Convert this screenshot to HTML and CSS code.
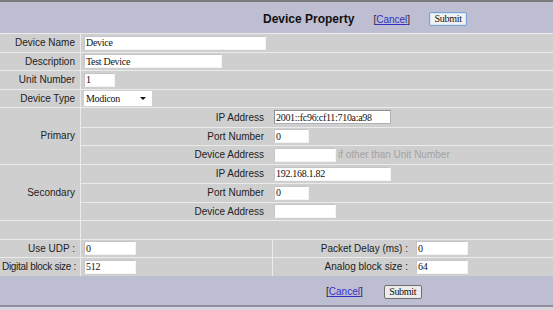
FILE: index.html
```html
<!DOCTYPE html>
<html lang="en">
<head>
  <meta charset="UTF-8">
  <meta name="viewport" content="width=device-width, initial-scale=1.0">
  <title>Device Property</title>
  <link rel="stylesheet" href="styles.css">
</head>
<body>
  <div class="bar bar-top">
    <span class="title">Device Property</span>
    <span class="cancel">[<a href="#">Cancel</a>]</span>
    <button class="btn btn-focus">Submit</button>
  </div>

  <div class="form">
    <div class="row">
      <div class="lbl">Device Name</div>
      <div class="val"><input class="txt w-name" value="Device"></div>
    </div>
    <div class="row">
      <div class="lbl">Description</div>
      <div class="val"><input class="txt w-desc" value="Test Device"></div>
    </div>
    <div class="row">
      <div class="lbl">Unit Number</div>
      <div class="val"><input class="txt w-unit" value="1"></div>
    </div>
    <div class="row">
      <div class="lbl">Device Type</div>
      <div class="val">
        <span class="select">
          <select>
            <option>Modicon</option>
          </select>
        </span>
      </div>
    </div>

    <div class="group">
      <div class="lbl">Primary</div>
      <div class="sub">
        <div class="sub-row">
          <div class="sublbl">IP Address</div>
          <div class="val"><input class="txt w-ip focus" value="2001::fc96:cf11:710a:a98"></div>
        </div>
        <div class="sub-row">
          <div class="sublbl">Port Number</div>
          <div class="val"><input class="txt w-port" value="0"></div>
        </div>
        <div class="sub-row">
          <div class="sublbl">Device Address</div>
          <div class="val"><input class="txt w-addr" value=""><span class="hint">if other than Unit Number</span></div>
        </div>
      </div>
    </div>

    <div class="group">
      <div class="lbl">Secondary</div>
      <div class="sub">
        <div class="sub-row">
          <div class="sublbl">IP Address</div>
          <div class="val"><input class="txt w-ip" value="192.168.1.82"></div>
        </div>
        <div class="sub-row">
          <div class="sublbl">Port Number</div>
          <div class="val"><input class="txt w-port" value="0"></div>
        </div>
        <div class="sub-row">
          <div class="sublbl">Device Address</div>
          <div class="val"><input class="txt w-addr" value=""></div>
        </div>
      </div>
    </div>

    <div class="row">
      <div class="lbl"></div>
      <div class="val"></div>
    </div>

    <div class="row row-split">
      <div class="lbl">Use UDP :</div>
      <div class="val val-mid"><input class="txt w-small" value="0"></div>
      <div class="lbl lbl-right">Packet Delay (ms) :</div>
      <div class="val"><input class="txt w-small" value="0"></div>
    </div>
    <div class="row row-split">
      <div class="lbl lbl-tight">Digital block size :</div>
      <div class="val val-mid"><input class="txt w-small" value="512"></div>
      <div class="lbl lbl-right">Analog block size :</div>
      <div class="val"><input class="txt w-small" value="64"></div>
    </div>
  </div>

  <div class="bar bar-bottom">
    <span class="cancel">[<a href="#">Cancel</a>]</span>
    <button class="btn">Submit</button>
  </div>
</body>
</html>
```

FILE: styles.css
```css
body {
  margin: 0;
  font-family: "Liberation Sans", Arial, sans-serif;
  font-size: 10px;
  color: #222;
  background-color: #d6d6de;
  overflow: hidden;
}

/* top and bottom bars */
.bar {
  display: flex;
  align-items: center;
  background-color: #bebed2;
}

.bar-top {
  border-top: 2px solid #7b7b7b;
  box-sizing: border-box;
  height: 33px;
  padding: 3px 0 0 263px;
}

.bar-bottom {
  padding: 3px 0 0 326px;
  box-sizing: border-box;
  border-bottom: 2px solid #8e8ea0;
  height: 31px;
}

.title {
  font-size: 12px;
  font-weight: bold;
  color: #111;
  margin-right: 19px;
}

.cancel {
  font-size: 10px;
  color: #222;
  margin-right: 19px;
}

.bar-bottom .cancel {
  margin-right: 21px;
}

.cancel a {
  color: #3030c8;
  text-decoration: underline;
}

.btn {
  font-family: "Liberation Serif", "Times New Roman", serif;
  font-size: 10px;
  letter-spacing: -0.3px;
  height: 14px;
  width: 38px;
  padding: 0;
  line-height: 12px;
  color: #111;
  background-color: #ececec;
  border: 1px solid #6e6e6e;
  border-radius: 2px;
}

.btn-focus {
  border-color: #7aa4d6;
  background-color: #f2f2f2;
  box-shadow: inset 0 0 0 1px #d8e6f4;
}

/* form rows */
.form {
  background-color: #cfcfcf;
}

.row,
.group {
  display: grid;
  grid-template-columns: 81px 1fr;
  border-top: 1px solid #ebebeb;
}

.row,
.sub-row {
  height: 18.5px;
  box-sizing: border-box;
}

.row-split {
  grid-template-columns: 81px 192px 140px 1fr;
}

.lbl {
  display: flex;
  justify-content: flex-end;
  align-items: center;
  padding-right: 5px;
  border-right: 1px solid #ebebeb;
  white-space: nowrap;
  overflow: hidden;
}

.lbl-tight {
  padding-right: 4px;
  letter-spacing: -0.3px;
}

.lbl-right {
  border-right: none;
}

.val {
  display: flex;
  align-items: center;
  padding-left: 3px;
  white-space: nowrap;
}

.val-mid {
  border-right: 1px solid #ebebeb;
}

.sub-row {
  display: grid;
  grid-template-columns: 190px 1fr;
  border-top: 1px solid #ebebeb;
}

.sub-row:first-child {
  border-top: none;
}

.sublbl {
  display: flex;
  justify-content: flex-end;
  align-items: center;
  padding-right: 7px;
  white-space: nowrap;
}

/* inputs */
.txt {
  font-family: "Liberation Serif", "Times New Roman", serif;
  font-size: 10px;
  letter-spacing: -0.3px;
  color: #111;
  height: 14px;
  box-sizing: border-box;
  padding: 0 1px;
  margin: 0;
  background-color: #fff;
  border: 1px solid;
  border-color: #c4c4cc #f4f4f4 #f4f4f4 #c4c4cc;
  outline: none;
}

.txt.focus {
  border-color: #8c8c94 #b0b0b8 #b0b0b8 #8c8c94;
}

.w-name { width: 182px; }
.w-desc { width: 138px; }
.w-unit { width: 31px; }
.w-ip { width: 117px; }
.w-port { width: 35px; }
.w-addr { width: 62px; }
.w-small { width: 52px; }

.select {
  position: relative;
  display: inline-block;
  width: 68px;
  height: 15px;
  background-color: #fff;
}

.select select {
  appearance: none;
  -webkit-appearance: none;
  font-family: "Liberation Serif", "Times New Roman", serif;
  font-size: 10px;
  letter-spacing: -0.3px;
  color: #111;
  width: 100%;
  height: 15px;
  padding: 0 0 0 2px;
  border: none;
  background: transparent;
}

.select::after {
  content: "";
  position: absolute;
  right: 6px;
  top: 6px;
  border-left: 3px solid transparent;
  border-right: 3px solid transparent;
  border-top: 3px solid #111;
}

.hint {
  color: #a2a2a2;
  margin-left: 2px;
}
```
